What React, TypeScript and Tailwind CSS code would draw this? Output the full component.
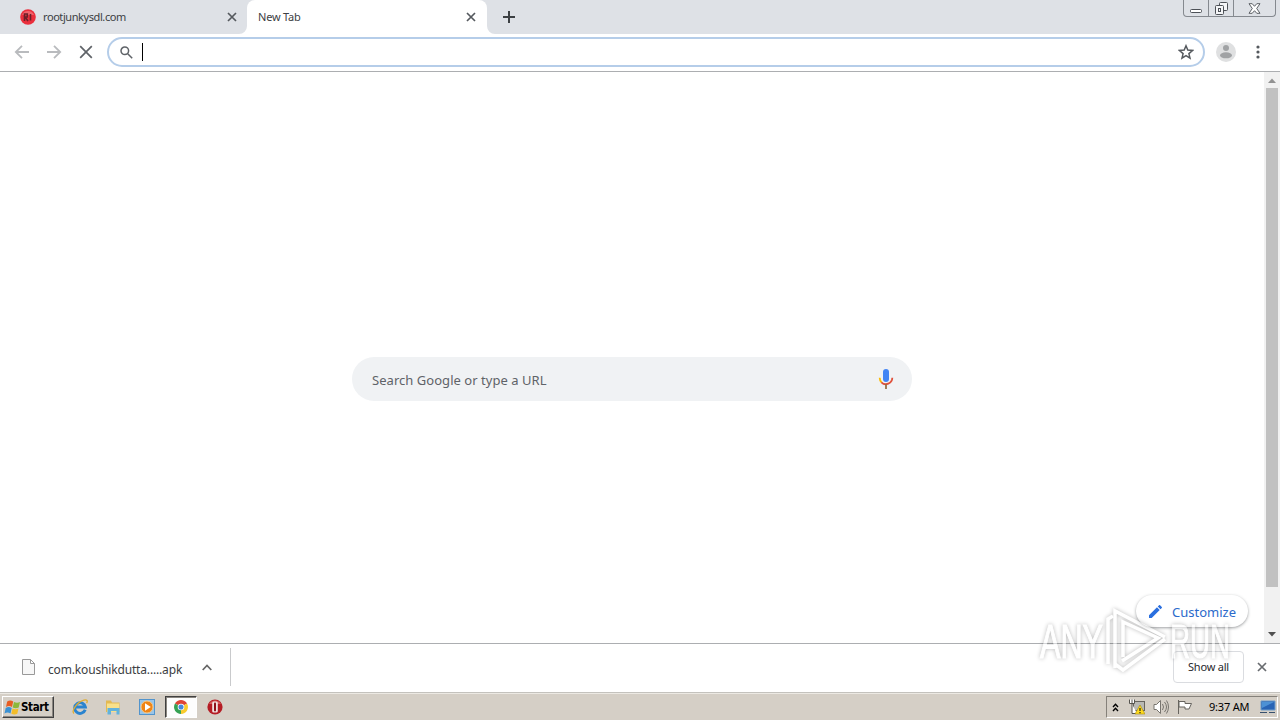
import React from 'react';

const CloseIcon = ({ className }: { className: string }) => (
  <svg className={className} viewBox="0 0 10 10" fill="none" stroke="currentColor">
    <path d="M1 1L9 9M9 1L1 9" strokeWidth="1.7" />
  </svg>
);

const TabStrip = () => (
  <div className="flex h-[34px] bg-[#dee1e6] text-[#3c4043] text-[11px]">
    <div className="flex w-[247px] items-center pl-5 pr-[10px]">
      <svg className="size-4 shrink-0" viewBox="0 0 16 16">
        <circle cx="8" cy="8" r="7.8" fill="#ea2f3c" />
        <path d="M2 6a6.5 6.5 0 0 1 12 0z" fill="#f0626a" />
        <path d="M4.5 12V5h2.800v3H5l3 4M10.5 5v6.5" stroke="#6b2028" strokeWidth="1.6" fill="none" />
      </svg>
      <span className="ml-[7px] flex-1 whitespace-nowrap tracking-[-0.42px]">rootjunkysdl.com</span>
      <CloseIcon className="size-[10px] text-[#55595e]" />
    </div>
    <div className="relative flex w-[240px] items-center rounded-t-lg bg-white pl-[11px] pr-[11px]">
      {/* bottom flares of the active tab */}
      <svg className="absolute bottom-0 -left-2 size-2" viewBox="0 0 8 8"><path d="M8 0v8H0a8 8 0 0 0 8-8" fill="#fff" /></svg>
      <svg className="absolute bottom-0 -right-2 size-2" viewBox="0 0 8 8"><path d="M0 0v8h8a8 8 0 0 1-8-8" fill="#fff" /></svg>
      <span className="flex-1 tracking-[-0.2px]">New Tab</span>
      <CloseIcon className="size-[10px] text-[#55595e]" />
    </div>
    <div className="flex flex-1 items-center pl-4">
      <svg className="size-3" viewBox="0 0 12 12" stroke="#3c4043" strokeWidth="2"><path d="M6 0v12M0 6h12" /></svg>
    </div>
    <div className="mr-1 flex h-[17px] w-[93px] rounded-b border border-t-0 border-[#85898f] text-[#4d5157]">
      <div className="flex w-[25px] items-end justify-center border-r border-[#85898f] pb-[3px]">
        <svg className="h-1 w-3" viewBox="0 0 12 4"><rect x=".5" y=".5" width="11" height="3" rx="1" fill="#fff" stroke="currentColor" /></svg>
      </div>
      <div className="flex w-[25px] items-center justify-center border-r border-[#85898f]">
        <svg className="size-[13px]" viewBox="0 0 13 13" fill="#f4f5f7" stroke="currentColor">
          <rect x="4.5" y=".5" width="8" height="8" rx="1" />
          <rect x=".5" y="3.5" width="8" height="9" rx="1" />
          <rect x="3.5" y="6.5" width="2" height="3" />
        </svg>
      </div>
      <div className="flex flex-1 items-center justify-center">
        <svg className="h-[11px] w-[13px]" viewBox="0 0 13 11" fill="#fff" stroke="currentColor" strokeWidth=".9">
          <path d="M1 .7h3.2l2.3 2.6L8.8.7H12L8.7 5.5 12 10.3H8.8L6.5 7.7l-2.3 2.6H1l3.3-4.8z" />
        </svg>
      </div>
    </div>
  </div>
);

const Toolbar = () => (
  <div className="flex h-[38px] items-center border-b border-[#acaeb1] bg-white pb-px">
    <svg className="ml-[14px] h-[14px] w-4" viewBox="0 0 16 14" fill="none" stroke="#b9bbbe" strokeWidth="1.8">
      <path d="M15 7H2M8 .8L1.8 7 8 13.2" />
    </svg>
    <svg className="ml-4 h-[14px] w-4" viewBox="0 0 16 14" fill="none" stroke="#b9bbbe" strokeWidth="1.8">
      <path d="M1 7h13M8 .8L14.2 7 8 13.2" />
    </svg>
    <svg className="ml-[17px] size-[14px]" viewBox="0 0 14 14" stroke="#5f6368" strokeWidth="1.7">
      <path d="M1.2 1.2l11.6 11.6M12.8 1.2L1.2 12.8" />
    </svg>
    <div className="ml-[14px] flex h-[30px] w-[1098px] items-center rounded-full border-2 border-[#b5cde9] pl-[11px] pr-[9px]">
      <svg className="size-[13px]" viewBox="0 0 13 13" fill="none" stroke="#5f6368" strokeWidth="1.5">
        <circle cx="4.8" cy="4.8" r="3.8" />
        <path d="M7.7 7.7l4.5 4.5" />
      </svg>
      <div className="ml-[9px] h-[18px] w-px bg-black" />
      <svg className="ml-auto size-4" viewBox="0 0 16 16" fill="none" stroke="#55595e" strokeWidth="1.5">
        <path d="M8 1.8l1.8 4.3 4.7.4-3.6 3.1 1.1 4.6L8 11.7l-4 2.5 1.1-4.6-3.6-3.1 4.7-.4z" />
      </svg>
    </div>
    <svg className="ml-[11px] size-5" viewBox="0 0 20 20">
      <circle cx="10" cy="10" r="10" fill="#dfe0e1" />
      <circle cx="10" cy="6" r="3" fill="#a0a2a4" />
      <ellipse cx="10" cy="13.3" rx="6" ry="3" fill="#a0a2a4" />
    </svg>
    <svg className="ml-5 h-[14px] w-1" viewBox="0 0 4 14" fill="#55595e">
      <circle cx="2" cy="2" r="1.6" />
      <circle cx="2" cy="7" r="1.6" />
      <circle cx="2" cy="12" r="1.6" />
    </svg>
  </div>
);

const NewTabPage = () => (
  <div className="flex h-[571px]">
    <div className="relative flex-1 bg-white pt-[285px]">
      <div className="mx-auto flex h-11 w-[560px] items-center rounded-full bg-[#f0f2f4] pl-5 pr-[18px]">
        <span className="flex-1 pt-[3px] text-[13px] tracking-[0.04px] text-[#5f6368]">Search Google or type a URL</span>
        <svg className="h-5 w-4" viewBox="0 0 16 20" fill="none" strokeWidth="1.8">
          <rect x="5" y="0" width="6" height="13" rx="3" fill="#4285f4" />
          <path d="M1.7 8.8c0 2.2.8 3.7 2 4.8" stroke="#fbbc05" />
          <path d="M3.4 13.3A6.4 6.4 0 0 0 14.3 8.8" stroke="#e0513b" />
          <path d="M8 15v5" stroke="#9a6e42" />
        </svg>
      </div>
      <div className="absolute right-4 bottom-4 flex h-8 w-28 items-center rounded-full bg-white pl-[13px] shadow-[0_1px_3px_rgba(60,64,67,0.5)]">
        <svg className="size-[13px]" viewBox="3 3 18 18" fill="#2a6fdf">
          <path d="M3 17.25V21h3.75L17.8 9.94l-3.75-3.75zM20.7 7.04a1 1 0 0 0 0-1.41l-2.34-2.34a1 1 0 0 0-1.41 0l-1.83 1.83 3.75 3.75z" />
        </svg>
        <span className="ml-[10px] pt-[3px] text-[13px] text-[#2b6acb]">Customize</span>
      </div>
    </div>
    <div className="flex w-4 flex-col items-center bg-[#f1f1f1]">
      <svg className="h-4 w-2" viewBox="0 0 8 16"><path d="M0 11l4-4.5L8 11z" fill="#929292" /></svg>
      <div className="h-[499px] w-3 bg-[#c1c1c1]" />
      <svg className="mt-auto h-[18px] w-2" viewBox="0 0 8 18"><path d="M0 7h8l-4 4.5z" fill="#505050" /></svg>
    </div>
  </div>
);

const DownloadShelf = () => (
  <div className="flex h-[49px] items-center border-t border-[#acaeb1] bg-white pb-0.5">
    <div className="flex h-[38px] w-[231px] items-center border-r border-[#c9cacc] pl-[22px]">
      <svg className="h-4 w-[13px]" viewBox="0 0 13 16" fill="#f7f7f7" stroke="#999">
        <path d="M.5.5h8l4 4v11H.5zM8.5.5v4h4" />
      </svg>
      <span className="ml-[13px] w-[134px] whitespace-nowrap pt-[5px] text-[12px] tracking-[-0.16px] text-[#3c4043]">com.koushikdutta.....apk</span>
      <svg className="ml-5 h-[7px] w-[10px]" viewBox="0 0 10 7" fill="none" stroke="#666" strokeWidth="1.7"><path d="M.7 6L5 1.5 9.3 6" /></svg>
    </div>
    <div className="ml-auto flex h-8 w-[71px] items-center justify-center rounded border border-[#dadce0] text-[11px] tracking-[-0.2px] text-[#27292c]">Show all</div>
    <CloseIcon className="ml-[13px] mr-[13px] size-[10px] text-[#686b6f]" />
  </div>
);

const StartFlag = () => (
  <svg className="h-[15px] w-[17px] shrink-0" viewBox="0 0 17 15">
    <path d="M3.2 1.5q3-2 6 0L8 7Q5 5 2 7z" fill="#e85d22" />
    <path d="M10 2q3 1.5 6 0l-1.3 5.5q-3 1.5-6 0z" fill="#8cb83a" />
    <path d="M1.7 8q3-2 6 0l-1.2 5.5q-3-2-6 0z" fill="#3a91d3" />
    <path d="M8.5 8.6q3 1.5 6 0l-1.2 5.2q-3 1.5-6 0z" fill="#f3bd2a" />
  </svg>
);

const Taskbar = () => (
  <div className="flex h-7 items-center border-t border-[#c4c2bd] bg-[#d5cfc6] pt-px text-black shadow-[inset_0_1px_0_#ece9e3]">
    <div className="ml-0.5 flex h-[22px] w-[52px] items-center border border-t-white border-r-[#404040] border-b-[#404040] border-l-white pl-px shadow-[inset_-1px_-1px_0_#8a8680]">
      <StartFlag />
      <span className="pt-px text-[11.5px] font-bold tracking-[-0.35px] font-['DejaVu_Sans_Condensed','DejaVu_Sans',sans-serif]">Start</span>
    </div>
    <svg className="ml-[18px] size-4" viewBox="0 0 16 16" fill="none">
      <path d="M13.2 10.8A5.4 5.4 0 1 1 13.4 8H4" stroke="#2a84cf" strokeWidth="2.9" />
      <path d="M2 14.5C-1 12 5 3 12 1.2c3-.8 4 .6 2.6 3" stroke="#dfac31" strokeWidth="1.3" />
    </svg>
    <svg className="ml-[17px] size-4" viewBox="0 0 16 16">
      <path d="M1 1.5h5l1 2h7.5V13H1z" fill="#e3b952" />
      <path d="M2 4.5h12V13H2z" fill="#f8e08a" />
      <path d="M2.5 15.5V9h12v6.5h-3V12H6v3.5z" fill="#62b2dc" />
    </svg>
    <svg className="ml-[18px] size-4" viewBox="0 0 16 16">
      <rect x=".5" y=".5" width="15" height="15" fill="#9ac5e8" stroke="#5294cc" />
      <circle cx="8" cy="8" r="6" fill="#ef8415" stroke="#fbc780" />
      <path d="M6 4.3v7.4L11.8 8z" fill="#fff" />
    </svg>
    <div className="ml-[10px] flex h-[22px] w-8 items-center justify-center border border-t-[#404040] border-r-white border-b-white border-l-[#404040] bg-[#fdfdfd] shadow-[inset_1px_1px_0_#8a8680]">
      <svg className="size-[14px]" viewBox="0 0 16 16">
        <path d="M8 8L1.1 4A8 8 0 0 1 14.9 4z" fill="#df4435" />
        <path d="M8 8l6.9-4A8 8 0 0 1 8 16z" fill="#f9cb2d" />
        <path d="M8 8v8A8 8 0 0 1 1.1 4z" fill="#36a254" />
        <circle cx="8" cy="8" r="3.8" fill="#fff" />
        <circle cx="8" cy="8" r="2.9" fill="#4688dc" />
      </svg>
    </div>
    <svg className="ml-[10px] size-4" viewBox="0 0 16 16">
      <circle cx="8" cy="8" r="7.6" fill="#b51c24" />
      <path d="M2 5a7 7 0 0 1 12 0z" fill="#d65b5c" />
      <rect x="5.2" y="2.5" width="5.6" height="11" rx="1.6" fill="#f0e4e2" />
      <rect x="7" y="3.6" width="2" height="8.8" rx=".8" fill="#8d1019" />
    </svg>
    {/* notification area */}
    <div className="ml-auto mr-0.5 flex h-[22px] w-[172px] items-center border border-t-[#85817a] border-r-white border-b-white border-l-[#85817a]">
      <svg className="ml-[5px] h-[9px] w-[7px]" viewBox="0 0 7 9" fill="none" stroke="#000" strokeWidth="1.4"><path d="M1 4l2.5-2.7L6 4M1 8l2.5-2.7L6 8" /></svg>
      <svg className="ml-[10px] size-4" viewBox="0 0 16 16">
        <rect x="4.5" y="2.5" width="11" height="9" fill="#b9b9b5" stroke="#66645f" />
        <path d="M.5.5v4h5v-4M3 .5v4M3 5v9.5h5" stroke="#55534e" fill="#fff" />
        <path d="M11 6l5 9H6z" fill="#ffda1c" stroke="#a58c12" strokeWidth=".6" />
        <path d="M11 9v3M11 13v1.2" stroke="#222" strokeWidth="1.2" />
      </svg>
      <svg className="ml-2 size-4" viewBox="0 0 16 16" fill="none" stroke="#77746e">
        <path d="M1 5.5h2.5l4-4v13l-4-4H1z" fill="#fff" />
        <path d="M9.5 5q2 3 0 6M11.5 3q4 5 0 10M13.5 1.5q4 6.5 0 13" />
      </svg>
      <svg className="ml-2 size-4" viewBox="0 0 16 16" fill="#fff" stroke="#67645f">
        <path d="M1.5 1v14M2 2.5h6v2h6.5L12 10H8V8H2z" />
      </svg>
      <span className="ml-4 w-[41px] whitespace-nowrap text-[11px] tracking-[-0.2px]">9:37 AM</span>
      <svg className="ml-auto mr-px h-[14px] w-4" viewBox="0 0 16 14">
        <path d="M1 1h14v9H1z" fill="#2864b5" stroke="#6f9dca" />
        <path d="M2 2h12L2 8z" fill="#4c91d5" />
        <path d="M0 12.5h7M9 12.5h6" stroke="#37506d" />
      </svg>
    </div>
  </div>
);

const Watermark = () => (
  <div className="pointer-events-none absolute top-[604px] left-[1034px] flex h-[72px] w-[204px] opacity-50 drop-shadow-[0_0_2px_rgba(0,0,0,0.55)]">
    <svg className="h-full w-full overflow-visible font-['Liberation_Sans',sans-serif]" viewBox="0 0 204 72" fill="#fff">
      <g stroke="#fff" strokeWidth="1.2">
        <text x="6" y="54" fontSize="49" textLength="63" lengthAdjust="spacingAndGlyphs">ANY</text>
        <text x="136" y="54" fontSize="49" textLength="60" lengthAdjust="spacingAndGlyphs">RUN</text>
      </g>
      <g fill="none" stroke="#fff" strokeWidth="3.5">
        <path d="M74 60V15l5-3" />
        <path d="M81 64V7l50 26" />
        <path d="M89 53V18l35 16-36 23" />
        <path d="M81 60l8 6 42-31" />
      </g>
    </svg>
  </div>
);

const App = () => {
  return (
    <div className="relative h-[720px] w-[1280px] overflow-hidden bg-white font-['Noto_Sans',sans-serif]">
      <TabStrip />
      <Toolbar />
      <NewTabPage />
      <DownloadShelf />
      <Taskbar />
      <Watermark />
    </div>
  );
};

export default App;
